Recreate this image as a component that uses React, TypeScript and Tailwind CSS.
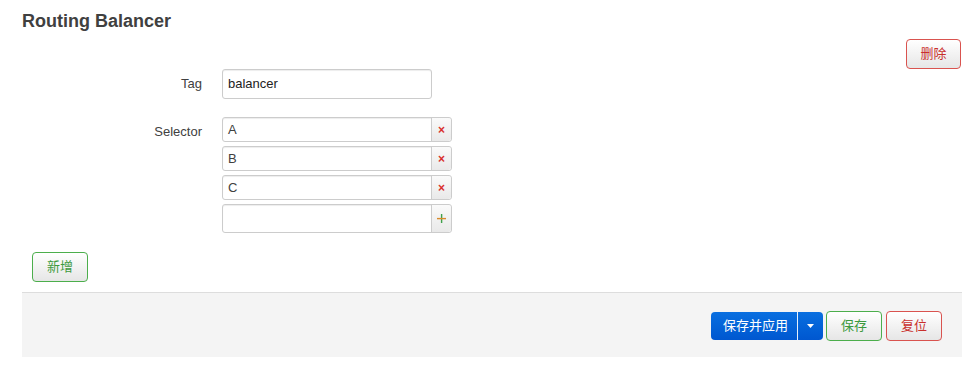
import React from "react";

const font = { fontFamily: '"Liberation Sans", Arial, "Noto Sans CJK SC", sans-serif' };

function SelectorRow({ value, last }: { value: string; last?: boolean }) {
  return (
    <div className={`flex w-[230px] ${last ? "h-[29px]" : "h-[25px]"} rounded-[3px] border border-[#cccccc] bg-white shadow-[inset_0_1px_1px_rgba(0,0,0,0.075)]`}>
      <div className="flex flex-1 items-center pl-[5px] text-[13px] text-[#404040]">{value}</div>
      <div className="flex w-[20px] items-center justify-center border-l border-[#cccccc] bg-gradient-to-b from-[#fafafa] to-[#e9e9e9] rounded-r-[3px]">
        {last ? (
          <svg width="9" height="9" viewBox="0 0 9 9">
            <rect x="3.9" y="0" width="1.4" height="9" fill="#3fa04a" />
            <rect x="0" y="3.9" width="9" height="1.4" fill="#d98a2a" />
          </svg>
        ) : (
          <span className="text-[12px] font-bold leading-none text-[#d9302c]">×</span>
        )}
      </div>
    </div>
  );
}

export default function App() {
  return (
    <div className="w-[975px] h-[372px] bg-white" style={font}>
      <div className="ml-[22px] w-[940px]">
        <h2 className="pt-[9px] text-[18px] font-bold leading-[24px] text-[#404040]">Routing Balancer</h2>
        <div className="mt-[6px] flex justify-end pr-[1px]">
          <button className="h-[30px] w-[55px] rounded-[4px] border border-[#d9534f] bg-gradient-to-b from-white to-[#e6e6e6] text-[13px] text-[#c9302c]">
            删除
          </button>
        </div>
        <div className="flex">
          <div className="w-[180px] pt-[6px] text-right text-[13px] leading-[18px] text-[#404040]">Tag</div>
          <div className="ml-[20px]">
            <div className="flex h-[30px] w-[210px] items-center rounded-[3px] border border-[#cccccc] pl-[5px] text-[13px] text-[#222] shadow-[inset_0_1px_1px_rgba(0,0,0,0.075)]">
              balancer
            </div>
          </div>
        </div>
        <div className="mt-[18px] flex">
          <div className="w-[180px] pt-[6px] text-right text-[13px] leading-[18px] text-[#404040]">Selector</div>
          <div className="ml-[20px] flex flex-col gap-[4px]">
            <SelectorRow value="A" />
            <SelectorRow value="B" />
            <SelectorRow value="C" />
            <SelectorRow value="" last />
          </div>
        </div>
        <div className="mt-[19px] pl-[10px]">
          <button className="h-[30px] w-[56px] rounded-[4px] border border-[#4cae4c] bg-gradient-to-b from-white to-[#e6e6e6] text-[13px] text-[#3d9a3d]">
            新增
          </button>
        </div>
        <div className="mt-[10px] flex h-[65px] items-center justify-end gap-[3px] border-t border-[#dddddd] bg-[#f4f4f4] pr-[20px] pt-[2px]">
          <div className="flex h-[28px] w-[112px] items-center rounded-[4px] bg-gradient-to-b from-[#0a6fe0] to-[#0057d0] text-[13px] text-white">
            <span className="flex-1 text-center pl-[3px]">保存并应用</span>
            <span className="h-full w-px bg-white/90" />
            <span className="flex w-[25px] items-center justify-center">
              <svg width="7" height="4" viewBox="0 0 7 4"><path d="M0 0h7L3.5 4z" fill="#fff" /></svg>
            </span>
          </div>
          <button className="h-[30px] w-[56px] rounded-[4px] border border-[#4cae4c] bg-gradient-to-b from-white to-[#e6e6e6] text-[13px] text-[#3d9a3d]">
            保存
          </button>
          <button className="ml-[1px] h-[30px] w-[56px] rounded-[4px] border border-[#d9534f] bg-gradient-to-b from-white to-[#e6e6e6] text-[13px] text-[#c9302c]">
            复位
          </button>
        </div>
      </div>
    </div>
  );
}
